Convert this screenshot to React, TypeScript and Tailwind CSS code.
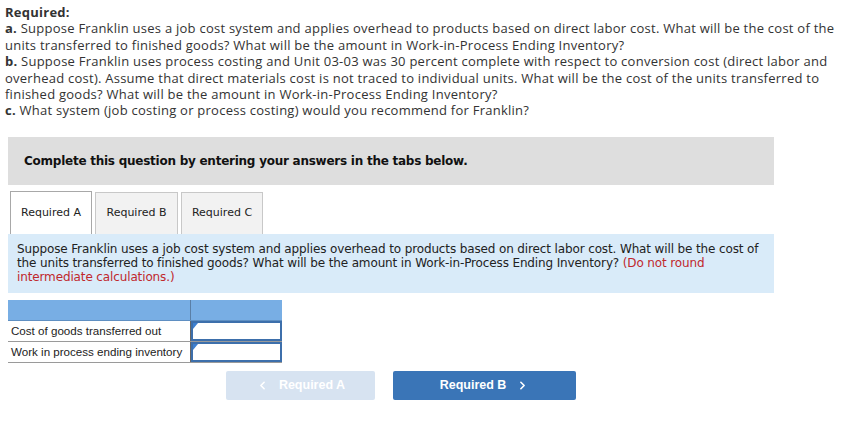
import React from "react";
import { ChevronLeft, ChevronRight } from "lucide-react";

const prox = { fontFamily: '"Open Sans", Arial, sans-serif' };
const arial = { fontFamily: '"Liberation Sans", Arial, sans-serif' };
const verd = { fontFamily: '"DejaVu Sans", Verdana, sans-serif' };

export default function App() {
  return (
    <div className="w-[851px] h-[444px] bg-white relative overflow-hidden">
      <div className="pl-[5px] pt-[4px] text-[13px] leading-[16.4px] tracking-[0.25px] text-[#333] whitespace-nowrap" style={prox}>
        <div className="font-bold">Required:</div>
        <div>
          <b>a.</b> Suppose Franklin uses a job cost system and applies overhead to products based on direct labor cost. What will be the cost of the
          <br />
          units transferred to finished goods? What will be the amount in Work-in-Process Ending Inventory?
        </div>
        <div>
          <b>b.</b> Suppose Franklin uses process costing and Unit 03-03 was 30 percent complete with respect to conversion cost (direct labor and
          <br />
          overhead cost). Assume that direct materials cost is not traced to individual units. What will be the cost of the units transferred to
          <br />
          finished goods? What will be the amount in Work-in-Process Ending Inventory?
        </div>
        <div>
          <b>c.</b> What system (job costing or process costing) would you recommend for Franklin?
        </div>
      </div>

      <div className="ml-[8px] mt-[18px] w-[766px] h-[48px] bg-[#dedede] flex items-center pl-[16px]">
        <span className="font-bold text-[12px] tracking-[-0.25px] text-[#111]" style={verd}>
          Complete this question by entering your answers in the tabs below.
        </span>
      </div>

      <div className="ml-[8px] mt-[6px] w-[766px]">
        <div className="flex gap-[3px] pl-[2px] h-[43px] items-end">
          <div className="w-[82px] h-[43px] bg-white border border-[#a8a8a8] border-b-0 flex items-center justify-center text-[11px] text-[#222]" style={verd}>
            Required A
          </div>
          <div className="w-[83px] h-[42px] bg-[#f2f2f2] border border-[#c8c8c8] border-b-0 flex items-center justify-center text-[11px] text-[#222]" style={verd}>
            Required B
          </div>
          <div className="w-[82px] h-[42px] bg-[#f2f2f2] border border-[#c8c8c8] border-b-0 flex items-center justify-center text-[11px] text-[#222]" style={verd}>
            Required C
          </div>
        </div>
        <div className="bg-[#d9ebf9] h-[59px] pl-[9px] pt-[8px] text-[12px] leading-[14px] tracking-[-0.13px] text-[#222] whitespace-nowrap" style={verd}>
          Suppose Franklin uses a job cost system and applies overhead to products based on direct labor cost. What will be the cost of
          <br />
          the units transferred to finished goods? What will be the amount in Work-in-Process Ending Inventory?{" "}
          <span className="text-[#c0282d]">(Do not round</span>
          <br />
          <span className="text-[#c0282d]">intermediate calculations.)</span>
        </div>
      </div>

      <div className="ml-[8px] mt-[7px] w-[274px] text-[11.6px] text-[#222] whitespace-nowrap" style={arial}>
        <div className="flex h-[21px] bg-[#78aee4] border-b border-[#5f8fc2]">
          <div className="w-[183px] border-r border-[#5a7fa6]" />
          <div className="flex-1" />
        </div>
        <div className="flex h-[21px] border-b border-[#9a9a9a]">
          <div className="w-[183px] flex items-center pl-[3px] border-r border-[#666]">Cost of goods transferred out</div>
          <div className="flex-1 relative border-2 border-[#3d6fab] bg-white">
            <div className="absolute left-0 top-0 w-0 h-0 border-t-[6px] border-t-[#3d7fd0] border-r-[5px] border-r-transparent" />
          </div>
        </div>
        <div className="flex h-[21px] border-b border-[#9a9a9a]">
          <div className="w-[183px] flex items-center pl-[3px] border-r border-[#666]">Work in process ending inventory</div>
          <div className="flex-1 relative border-2 border-[#3d6fab] bg-white">
            <div className="absolute left-0 top-0 w-0 h-0 border-t-[6px] border-t-[#3d7fd0] border-r-[5px] border-r-transparent" />
          </div>
        </div>
      </div>

      <div className="flex gap-[18px] ml-[226px] mt-[8px]" style={arial}>
        <div className="w-[149px] h-[29px] rounded-[2px] bg-[#d7e3f1] flex items-center justify-center gap-[10px] text-white font-bold text-[12.5px]">
          <ChevronLeft size={13} strokeWidth={3} />
          <span>Required A</span>
        </div>
        <div className="w-[183px] h-[29px] rounded-[2px] bg-[#3a75b7] flex items-center justify-center gap-[10px] text-white font-bold text-[12.5px]">
          <span>Required B</span>
          <ChevronRight size={13} strokeWidth={3} />
        </div>
      </div>
    </div>
  );
}
